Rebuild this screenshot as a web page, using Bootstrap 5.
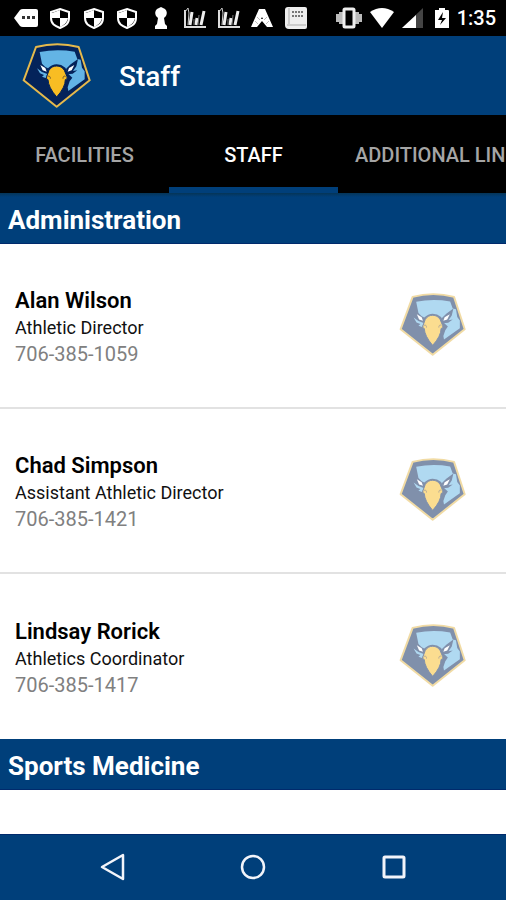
<!DOCTYPE html>
<html lang="en">
<head>
<meta charset="utf-8">
<meta name="viewport" content="width=device-width, initial-scale=1">
<title>Staff</title>
<link href="https://cdn.jsdelivr.net/npm/bootstrap@5.3.0/dist/css/bootstrap.min.css" rel="stylesheet">
<style>
:root { --brand: #003f7a; }
body { font-family: Roboto, "Liberation Sans", sans-serif; }
.brand-bg { background: var(--brand); }
.status-bar { padding: 6px 10px 6px 14px; height: 36px; }
.status-apps { width: 61%; }
.status-time { font-size: 20px; line-height: 24px; font-weight: 500; }
.app-bar { height: 79px; padding: 0 22px; gap: 27px; }
.app-bar h1 { padding-top: 2px; font-size: 28px; line-height: 32px; font-weight: 500; }
.crest { width: 70px; height: 67px; }
.crest-faded { width: 68px; height: 65px; opacity: .5; }
.tab-strip { height: 78px; }
.tab-link { flex: 0 0 auto; min-width: 33.4%; padding: 8px 17px 0; font-size: 20px; line-height: 24px; font-weight: 500; color: #a5a5a5; border-bottom: 6px solid transparent; white-space: nowrap; text-decoration: none; }
.tab-link.active { color: #fff; border-bottom-color: var(--brand); }
.section-title { height: 51px; padding: 3px 8px 0; font-size: 26px; line-height: 32px; font-weight: 700; border-bottom: 1px solid #002a6c; }
.section-top { background: linear-gradient(#053557, var(--brand) 4px); }
.staff-row { height: 165px; padding: 0 39px 2px 15px; border-bottom: 2px solid #e2e2e2; }
.staff-last { border-bottom: 0; }
.staff-info { padding-top: 4px; }
.staff-name { font-size: 22px; line-height: 28px; font-weight: 600; color: #000; }
.staff-role { font-size: 18px; line-height: 26px; color: #111; }
.staff-phone { font-size: 20px; line-height: 26px; color: #808080; text-decoration: none; }
.nav-keys { height: 66px; padding: 0 42px 2px; border-top: 1px solid #002a6c; }
.nav-key { border: 0; background: none; }
</style>
<script src="https://cdn.jsdelivr.net/npm/bootstrap@5.3.0/dist/js/bootstrap.bundle.min.js"></script>
</head>
<body class="bg-white min-vh-100 d-flex flex-column overflow-x-hidden">

<svg class="d-none" aria-hidden="true">
  <symbol id="crest" viewBox="6 9 210 201">
    <path d="M48 24Q112 7 176 24L209 124L110 203L11 124Z" fill="#04235a" stroke="#e5b94c" stroke-width="6" stroke-linejoin="round"/>
    <path d="M59 39Q110 29 164 38L172 60L182 62L186 86L194 97L194 121L145 156L143 145L149 127L157 116L146 106L136 86Q124 76 110 76Q96 76 84 88L76 84L66 74Z" fill="#63b4e5"/>
    <path d="M51 88L66 99L82 105L77 117L66 113L72 108L60 103Z" fill="#63b4e5"/>
    <path d="M174 60L152 76L138 90L143 106L158 104L172 94L159 96L169 82Z" fill="#04235a"/>
    <path d="M61 78L76 87L80 98L68 94ZM163 78L147 87L143 98L155 94Z" fill="#fff"/>
    <path d="M110 81Q125 81 133 94L141 113Q144 121 136 122Q136 145 110 174Q85 145 84 122Q77 121 80 113L87 94Q95 81 110 81Z" fill="#f8bd23" stroke="#04235a" stroke-width="3"/>
    <path d="M83 112Q91 109 91 119M137 112Q129 109 129 119" fill="none" stroke="#6c5730" stroke-width="3"/>
  </symbol>
  <symbol id="shield" viewBox="0 0 24 24">
    <path d="M12 3L21 6V12C21 18 17 20 12 22C7 20 3 18 3 12V6Z" fill="#000" stroke="#fff" stroke-width="2"/>
    <path d="M12 4V12H4V7ZM12 12H20C19 17 16 19 12 21Z" fill="#fff"/>
  </symbol>
  <symbol id="chart" viewBox="0 0 24 24">
    <path d="M2 4V21H23" fill="none" stroke="#ddd" stroke-width="2"/>
    <path d="M2 6L5 2L6 7L5 19" fill="none" stroke="#ccc" stroke-width="1"/>
    <path d="M9 6L7 19M14 12L13 19M21 5L18 19" fill="none" stroke="#eee" stroke-width="3"/>
    <path d="M11 13V19M16 9L15 19" stroke="#777" stroke-width="1"/>
  </symbol>
</svg>

<div class="status-bar bg-black text-white d-flex align-items-center justify-content-between">
  <div class="status-apps d-flex justify-content-between" aria-hidden="true">
    <svg width="24" height="24" viewBox="0 0 24 24"><path d="M0 12L6 4Q7 3 9 3H22Q24 3 24 5V19Q24 21 22 21H9Q7 21 6 20Z" fill="#fff"/><path d="M8 10h3v3H8zM13 10h3v3h-3zM18 10h3v3h-3z" fill="#333"/></svg>
    <svg width="24" height="24"><use href="#shield"/></svg>
    <svg width="24" height="24"><use href="#shield"/></svg>
    <svg width="24" height="24"><use href="#shield"/></svg>
    <svg width="24" height="24" viewBox="0 0 24 24"><path d="M8 3L12 1L16 3Q19 6 17 10L15 12L16 18L18 20V23H6V20L8 18L9 12L7 10Q5 6 8 3Z" fill="#fff"/></svg>
    <svg width="24" height="24"><use href="#chart"/></svg>
    <svg width="24" height="24"><use href="#chart"/></svg>
    <svg width="24" height="24" viewBox="0 0 24 24"><path d="M9 3H15L23 21H17L12 15L7 21H1Z" fill="#fff"/><path d="M12 11L11 13H13Z" fill="#000"/><path d="M7 11L10 14M5 15L8 18M17 11L14 14M19 15L16 18" stroke="#bbb"/></svg>
    <svg width="24" height="24" viewBox="0 0 24 24"><path d="M4 1H21Q23 1 23 3V21Q23 23 21 23H5Q1 23 1 19V4Q1 1 4 1Z" fill="#eee"/><path d="M8 6H19M8 10H19" stroke="#777" stroke-width="2" stroke-dasharray="2 1"/><path d="M3 19H22M5 2V18" stroke="#aaa"/></svg>
  </div>
  <div class="d-flex align-items-center gap-2">
    <svg width="26" height="24" viewBox="0 0 26 24" role="img" aria-label="Vibrate"><path d="M0 8h3v8H0zM3 6h4v12H3zM19 6h4v12h-4zM23 8h3v8h-3z" fill="#bbb"/><rect x="8" y="3" width="10" height="18" rx="1" fill="#000" stroke="#eee" stroke-width="3"/></svg>
    <svg width="24" height="24" viewBox="0 0 24 24" role="img" aria-label="Wi-Fi"><path d="M0 6Q12 -2 24 6L12 22Z" fill="#fff"/></svg>
    <svg width="21" height="24" viewBox="0 0 21 24" role="img" aria-label="Signal"><path d="M0 22L21 2V22Z" fill="#444"/><path d="M0 22L14 9V22Z" fill="#fff"/></svg>
    <svg class="ms-1" width="14" height="24" viewBox="0 0 14 24" role="img" aria-label="Charging"><path d="M4 2H10V4H13Q14 4 14 5V22H0V4H4Z" fill="#fff"/><path d="M8 6L3 14H7L5 19L11 12H7Z" fill="#000"/></svg>
    <span class="status-time">1:35</span>
  </div>
</div>

<header class="app-bar brand-bg text-white d-flex align-items-center">
  <svg class="crest" role="img" aria-label="Team crest"><use href="#crest"/></svg>
  <h1 class="m-0">Staff</h1>
</header>

<nav class="tab-strip bg-black d-flex overflow-hidden" aria-label="Sections">
  <a class="tab-link d-flex align-items-center justify-content-center" href="#facilities">FACILITIES</a>
  <a class="tab-link active d-flex align-items-center justify-content-center" href="#staff" aria-current="page">STAFF</a>
  <a class="tab-link d-flex align-items-center justify-content-center" href="#links">ADDITIONAL LINKS</a>
</nav>

<main class="flex-grow-1" id="staff">
  <h2 class="section-title section-top text-white m-0 d-flex align-items-center">Administration</h2>
  <div class="staff-row d-flex align-items-center justify-content-between">
    <div class="staff-info">
      <div class="staff-name">Alan Wilson</div>
      <div class="staff-role">Athletic Director</div>
      <a class="staff-phone d-block" href="tel:7063851059">706-385-1059</a>
    </div>
    <svg class="crest-faded" aria-hidden="true"><use href="#crest"/></svg>
  </div>
  <div class="staff-row d-flex align-items-center justify-content-between">
    <div class="staff-info">
      <div class="staff-name">Chad Simpson</div>
      <div class="staff-role">Assistant Athletic Director</div>
      <a class="staff-phone d-block" href="tel:7063851421">706-385-1421</a>
    </div>
    <svg class="crest-faded" aria-hidden="true"><use href="#crest"/></svg>
  </div>
  <div class="staff-row staff-last d-flex align-items-center justify-content-between">
    <div class="staff-info">
      <div class="staff-name">Lindsay Rorick</div>
      <div class="staff-role">Athletics Coordinator</div>
      <a class="staff-phone d-block" href="tel:7063851417">706-385-1417</a>
    </div>
    <svg class="crest-faded" aria-hidden="true"><use href="#crest"/></svg>
  </div>
  <h2 class="section-title brand-bg text-white m-0 d-flex align-items-center">Sports Medicine</h2>
</main>

<footer class="nav-keys brand-bg d-flex align-items-center">
  <button class="nav-key flex-fill p-0" type="button" aria-label="Back"><svg width="28" height="28" viewBox="0 0 28 28" fill="none" stroke="#f2f4fa" stroke-width="2.500" stroke-linejoin="round"><path d="M4 14L25 2V26Z"/></svg></button>
  <button class="nav-key flex-fill p-0" type="button" aria-label="Home"><svg width="28" height="28" viewBox="0 0 28 28" fill="none" stroke="#f2f4fa" stroke-width="2.500"><circle cx="14" cy="14" r="11"/></svg></button>
  <button class="nav-key flex-fill p-0" type="button" aria-label="Recent apps"><svg width="28" height="28" viewBox="0 0 28 28" fill="none" stroke="#f2f4fa" stroke-width="3"><rect x="4" y="4" width="20" height="20" rx="1"/></svg></button>
</footer>
</body>
</html>
